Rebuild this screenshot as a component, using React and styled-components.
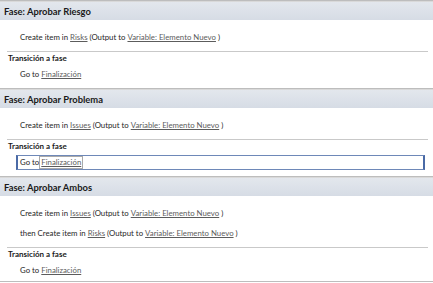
import React from "react";
import styled, { createGlobalStyle } from "styled-components";

const Global = createGlobalStyle`
  html, body { margin: 0; padding: 0; background: #ffffff; }
  body { font-family: "Lato", "Liberation Sans", sans-serif; font-size: 7.8px; color: #262626; }
`;

const Page = styled.div`
  width: 433px;
  height: 283px;
  overflow: hidden;
  display: flex;
  flex-direction: column;
`;

const Phase = styled.section`
  display: flex;
  flex-direction: column;
  border-top: 1px solid #bdbdbd;
  box-shadow: inset 0 1px 0 #d9d9d9;
  padding-top: 1px;
  &:last-child {
    border-bottom: 1px solid #bdbdbd;
  }
`;

const PhaseHeader = styled.div`
  height: 18px;
  display: flex;
  align-items: center;
  padding-left: 4px;
  background: linear-gradient(#e3e7ed, #d6dce5);
  font-weight: 700;
  font-size: 9.4px;
  color: #1a1a1a;
`;

const PhaseBody = styled.div`
  display: flex;
  flex-direction: column;
  padding: 7px 5px ${(p) => (p.$last ? "1px" : "4px")} 0;
`;

const ActionRow = styled.div`
  height: 20px;
  display: flex;
  align-items: center;
  padding-left: 20px;
  white-space: pre;
`;

const Link = styled.span`
  color: #5c5c5c;
  text-decoration: underline;
  text-underline-offset: 1px;
`;

const Separator = styled.div`
  margin: 4px 0 0 7px;
  border-top: 1px solid #c9c9c9;
`;

const TransitionTitle = styled.div`
  height: 12px;
  display: flex;
  align-items: center;
  padding-left: 8px;
  font-weight: 700;
  font-size: 8px;
  color: #1a1a1a;
`;

const TransitionRow = styled.div`
  height: 20px;
  display: flex;
  align-items: center;
  padding-left: ${(p) => (p.$editing ? "16px" : "20px")};
  white-space: pre;
`;

const EditBox = styled.div`
  flex: 1;
  height: 15px;
  display: flex;
  align-items: center;
  padding-left: 2px;
  margin-right: 3px;
  border: 1px solid #6e88b8;
  border-left: 2px solid #4a6aa6;
  border-right: 2px solid #4a6aa6;
  box-sizing: border-box;
  white-space: pre;
`;

const Token = styled.span`
  color: #5c5c5c;
  text-decoration: underline;
  text-underline-offset: 1px;
  border: 1px solid #a9a9a9;
  padding: 0 1px;
  line-height: 11px;
`;

const phases = [
  {
    name: "Aprobar Riesgo",
    actions: [{ prefix: "", list: "Risks" }],
  },
  {
    name: "Aprobar Problema",
    actions: [{ prefix: "", list: "Issues" }],
    editing: true,
  },
  {
    name: "Aprobar Ambos",
    actions: [
      { prefix: "", list: "Issues" },
      { prefix: "then ", list: "Risks" },
    ],
  },
];

export default function App() {
  return (
    <>
      <Global />
      <Page>
        {phases.map((ph, idx) => (
          <Phase key={ph.name}>
            <PhaseHeader>Fase: {ph.name}</PhaseHeader>
            <PhaseBody $last={idx === phases.length - 1}>
              {ph.actions.map((a, i) => (
                <ActionRow key={i}>
                  {a.prefix}Create item in <Link>{a.list}</Link> (Output to{" "}
                  <Link>Variable: Elemento Nuevo</Link> )
                </ActionRow>
              ))}
              <Separator />
              <TransitionTitle>Transición a fase</TransitionTitle>
              <TransitionRow $editing={ph.editing}>
                {ph.editing ? (
                  <EditBox>
                    Go to<Token>Finalización</Token>
                  </EditBox>
                ) : (
                  <>
                    Go to <Link>Finalización</Link>
                  </>
                )}
              </TransitionRow>
            </PhaseBody>
          </Phase>
        ))}
      </Page>
    </>
  );
}
